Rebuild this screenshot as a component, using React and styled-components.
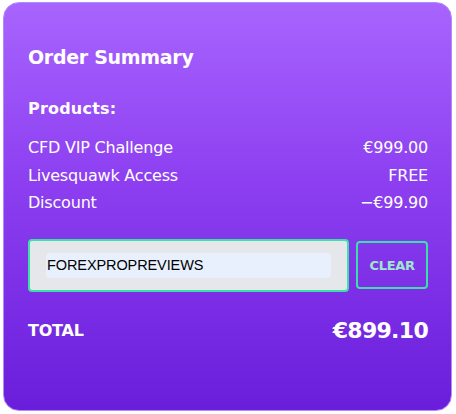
import React from "react";
import styled, { createGlobalStyle } from "styled-components";

const Global = createGlobalStyle`
  html, body { margin: 0; padding: 0; background: #ffffff; }
  body { font-family: "DejaVu Sans", "Open Sans", sans-serif; }
`;

const Page = styled.div`
  padding: 2px 4px 3px 3px;
`;

const Card = styled.section`
  box-sizing: border-box;
  height: 409px;
  border-radius: 16px;
  border: 1px solid #b58af5;
  background: linear-gradient(180deg, #a864fe 0%, #8c3ef0 45%, #6a1edb 100%);
  padding: 40px 23px 0 24px;
  color: #ffffff;
  display: flex;
  flex-direction: column;
`;

const Title = styled.h2`
  margin: 0;
  font-size: 19px;
  font-weight: 700;
  line-height: 28px;
  letter-spacing: -0.3px;
`;

const Subtitle = styled.h3`
  margin: 26px 0 0;
  font-size: 16px;
  font-weight: 700;
  line-height: 24px;
  letter-spacing: 0.2px;
`;

const List = styled.div`
  margin-top: 13px;
  display: flex;
  flex-direction: column;
`;

const Row = styled.div`
  display: flex;
  justify-content: space-between;
  align-items: center;
  height: 27.5px;
  font-size: 16px;
  letter-spacing: -0.2px;
`;

const CouponRow = styled.div`
  margin-top: 22px;
  display: flex;
  gap: 7px;
  align-items: center;
`;

const InputBox = styled.div`
  box-sizing: border-box;
  width: 322px;
  height: 53px;
  border: 2px solid #3be0a8;
  border-radius: 4px;
  background: #e5e7eb;
  padding: 12px 16px;
`;

const Input = styled.input`
  box-sizing: border-box;
  width: 100%;
  height: 25px;
  border: none;
  outline: none;
  border-radius: 4px;
  background: #e8f0fe;
  padding: 0 0 0 1px;
  font-family: "Liberation Sans", Arial, sans-serif;
  font-size: 14.5px;
  letter-spacing: -0.1px;
  color: #000000;
`;

const ClearButton = styled.button`
  box-sizing: border-box;
  width: 72px;
  height: 48px;
  border: 2px solid #3be0a8;
  border-radius: 4px;
  background: transparent;
  color: #9ee8cc;
  font-family: "DejaVu Sans", sans-serif;
  font-weight: 700;
  font-size: 13px;
  letter-spacing: -0.3px;
  cursor: pointer;
`;

const TotalRow = styled.div`
  margin-top: 26px;
  display: flex;
  justify-content: space-between;
  align-items: center;
`;

const TotalLabel = styled.span`
  font-size: 16px;
  font-weight: 700;
  letter-spacing: -0.2px;
`;

const TotalValue = styled.span`
  font-size: 22px;
  font-weight: 700;
  letter-spacing: -0.7px;
`;

const items = [
  ["CFD VIP Challenge", "€999.00"],
  ["Livesquawk Access", "FREE"],
  ["Discount", "−€99.90"],
];

export default function App() {
  return (
    <Page>
      <Global />
      <Card>
        <Title>Order Summary</Title>
        <Subtitle>Products:</Subtitle>
        <List>
          {items.map(([name, price]) => (
            <Row key={name}>
              <span>{name}</span>
              <span>{price}</span>
            </Row>
          ))}
        </List>
        <CouponRow>
          <InputBox>
            <Input defaultValue="FOREXPROPREVIEWS" />
          </InputBox>
          <ClearButton>CLEAR</ClearButton>
        </CouponRow>
        <TotalRow>
          <TotalLabel>TOTAL</TotalLabel>
          <TotalValue>€899.10</TotalValue>
        </TotalRow>
      </Card>
    </Page>
  );
}
